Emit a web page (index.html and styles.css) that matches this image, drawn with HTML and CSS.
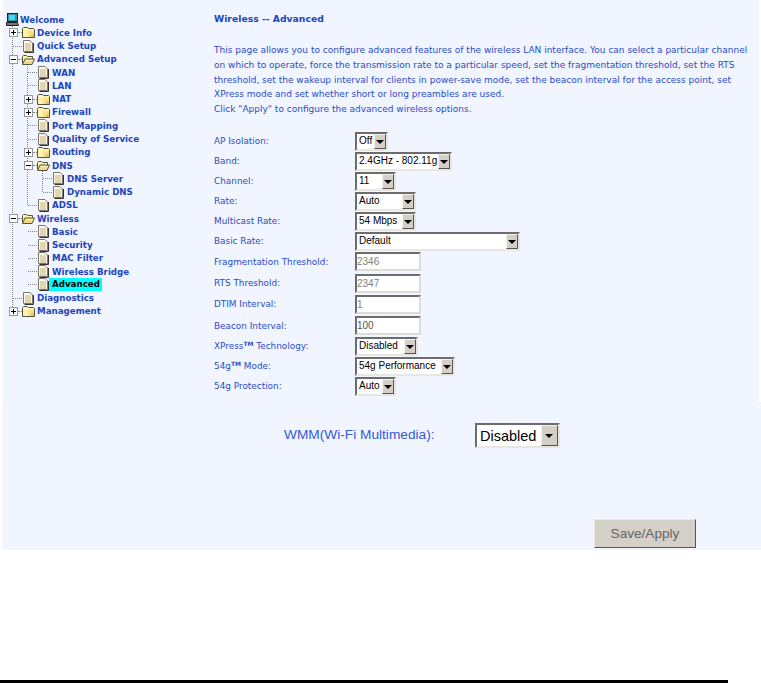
FILE: index.html
```html
<!DOCTYPE html>
<html lang="en">
<head>
<meta charset="utf-8">
<title>Wireless -- Advanced</title>
<link rel="stylesheet" href="styles.css">
</head>
<body>
<svg class="sprites" width="0" height="0" aria-hidden="true">
  <defs>
    <symbol id="folder" viewBox="0 0 13 13">
      <path d="M.5 11.5V2.5L1.5 1.5H5.5L6.500 2.500H11.500L12.500 3.500V11.500Z" fill="#fff2a8" stroke="#55553f"/>
      <path d="M1.500 3.500H5.500" stroke="#fffbe0"/>
      <path d="M6 5h6v6H6z" fill="#f5e08c"/>
      <path d="M9 8h3v3H9z" fill="#e0c66e"/>
    </symbol>
    <symbol id="open" viewBox="0 0 13 13">
      <path d="M.5 10.500V3.500L1.500 2.500H4.500L5.500 3.500H10.500V6" fill="#fff2a8" stroke="#55553f"/>
      <path d="M.5 11.500L3 6H12.500L10 11.500Z" fill="#f0d97e" stroke="#55553f"/>
      <path d="M4 7.500H11" stroke="#fff8cc"/>
    </symbol>
    <symbol id="doc" viewBox="0 0 13 13">
      <path d="M1.500 .5H8L10.500 3V11.500H1.500Z" fill="#fff8e4" stroke="#777"/>
      <path d="M3 4H9M3 6H9M3 8H9M3 10H9" stroke="#c4b27c"/>
      <path d="M11.500 3V12.500H2.500" fill="none" stroke="#333"/>
    </symbol>
    <symbol id="plus" viewBox="0 0 9 9">
      <rect x=".5" y=".5" width="8" height="8" fill="#fff" stroke="#999"/>
      <path d="M2 4.500H7M4.500 2V7" stroke="#000"/>
    </symbol>
    <symbol id="minus" viewBox="0 0 9 9">
      <rect x=".5" y=".5" width="8" height="8" fill="#fff" stroke="#999"/>
      <path d="M2 4.500H7" stroke="#000"/>
    </symbol>
    <symbol id="pc" viewBox="0 0 13 13">
      <rect x="1.500" y=".5" width="10" height="8" fill="#3a8aa8" stroke="#222"/>
      <rect x="3" y="2" width="6" height="5" fill="#35e0f5"/>
      <path d="M.5 9.500H11.500L12.500 12.500H.5Z" fill="#777" stroke="#222"/>
    </symbol>
  </defs>
</svg>
<div class="panel-top">
  <nav class="tree">
    <i class="guide g1"></i><i class="guide g2"></i><i class="guide g3"></i>
    <div class="node root"><svg class="pc"><use href="#pc"/></svg><a>Welcome</a></div>
    <div class="node l1"><svg class="box"><use href="#plus"/></svg><i class="dots"></i><svg class="ico"><use href="#folder"/></svg><a>Device Info</a></div>
    <div class="node l1"><i class="dots long"></i><svg class="ico"><use href="#doc"/></svg><a>Quick Setup</a></div>
    <div class="node l1"><svg class="box"><use href="#minus"/></svg><i class="dots"></i><svg class="ico"><use href="#open"/></svg><a>Advanced Setup</a></div>
    <div class="node l2"><i class="dots long"></i><svg class="ico"><use href="#doc"/></svg><a>WAN</a></div>
    <div class="node l2"><i class="dots long"></i><svg class="ico"><use href="#doc"/></svg><a>LAN</a></div>
    <div class="node l2"><svg class="box"><use href="#plus"/></svg><i class="dots"></i><svg class="ico"><use href="#folder"/></svg><a>NAT</a></div>
    <div class="node l2"><svg class="box"><use href="#plus"/></svg><i class="dots"></i><svg class="ico"><use href="#folder"/></svg><a>Firewall</a></div>
    <div class="node l2"><i class="dots long"></i><svg class="ico"><use href="#doc"/></svg><a>Port Mapping</a></div>
    <div class="node l2"><i class="dots long"></i><svg class="ico"><use href="#doc"/></svg><a>Quality of Service</a></div>
    <div class="node l2"><svg class="box"><use href="#plus"/></svg><i class="dots"></i><svg class="ico"><use href="#folder"/></svg><a>Routing</a></div>
    <div class="node l2"><svg class="box"><use href="#minus"/></svg><i class="dots"></i><svg class="ico"><use href="#open"/></svg><a>DNS</a></div>
    <div class="node l3"><i class="dots long"></i><svg class="ico"><use href="#doc"/></svg><a>DNS Server</a></div>
    <div class="node l3"><i class="dots long"></i><svg class="ico"><use href="#doc"/></svg><a>Dynamic DNS</a></div>
    <div class="node l2"><i class="dots long"></i><svg class="ico"><use href="#doc"/></svg><a>ADSL</a></div>
    <div class="node l1"><svg class="box"><use href="#minus"/></svg><i class="dots"></i><svg class="ico"><use href="#open"/></svg><a>Wireless</a></div>
    <div class="node l2"><i class="dots long"></i><svg class="ico"><use href="#doc"/></svg><a>Basic</a></div>
    <div class="node l2"><i class="dots long"></i><svg class="ico"><use href="#doc"/></svg><a>Security</a></div>
    <div class="node l2"><i class="dots long"></i><svg class="ico"><use href="#doc"/></svg><a>MAC Filter</a></div>
    <div class="node l2"><i class="dots long"></i><svg class="ico"><use href="#doc"/></svg><a>Wireless Bridge</a></div>
    <div class="node l2"><i class="dots long"></i><svg class="ico"><use href="#doc"/></svg><a class="current">Advanced</a></div>
    <div class="node l1"><i class="dots long"></i><svg class="ico"><use href="#doc"/></svg><a>Diagnostics</a></div>
    <div class="node l1"><svg class="box"><use href="#plus"/></svg><i class="dots"></i><svg class="ico"><use href="#folder"/></svg><a>Management</a></div>
  </nav>
  <main class="content">
    <h1 class="title">Wireless -- Advanced</h1>
    <p class="intro">This page allows you to configure advanced features of the wireless LAN interface. You can select a particular channel<br>on which to operate, force the transmission rate to a particular speed, set the fragmentation threshold, set the RTS<br>threshold, set the wakeup interval for clients in power-save mode, set the beacon interval for the access point, set<br>XPress mode and set whether short or long preambles are used.<br>Click "Apply" to configure the advanced wireless options.</p>
    <div class="form">
      <div class="row"><span class="lbl">AP Isolation:</span><span class="sel w33"><span class="val">Off</span><b class="arrow"></b></span></div>
      <div class="row"><span class="lbl">Band:</span><span class="sel w97"><span class="val">2.4GHz - 802.11g</span><b class="arrow"></b></span></div>
      <div class="row"><span class="lbl">Channel:</span><span class="sel w41"><span class="val">11</span><b class="arrow"></b></span></div>
      <div class="row"><span class="lbl">Rate:</span><span class="sel w61"><span class="val">Auto</span><b class="arrow"></b></span></div>
      <div class="row"><span class="lbl">Multicast Rate:</span><span class="sel w61"><span class="val">54 Mbps</span><b class="arrow"></b></span></div>
      <div class="row"><span class="lbl">Basic Rate:</span><span class="sel w165"><span class="val">Default</span><b class="arrow"></b></span></div>
      <div class="row tall"><span class="lbl">Fragmentation Threshold:</span><span class="inp">2346</span></div>
      <div class="row tall"><span class="lbl">RTS Threshold:</span><span class="inp">2347</span></div>
      <div class="row tall"><span class="lbl">DTIM Interval:</span><span class="inp">1</span></div>
      <div class="row tall"><span class="lbl">Beacon Interval:</span><span class="inp dark">100</span></div>
      <div class="row"><span class="lbl">XPress<sup class="tm">TM</sup> Technology:</span><span class="sel w63"><span class="val">Disabled</span><b class="arrow"></b></span></div>
      <div class="row"><span class="lbl">54g<sup class="tm">TM</sup> Mode:</span><span class="sel w100"><span class="val">54g Performance</span><b class="arrow"></b></span></div>
      <div class="row"><span class="lbl">54g Protection:</span><span class="sel w41"><span class="val">Auto</span><b class="arrow"></b></span></div>
    </div>
  </main>
</div>
<div class="panel-bottom">
  <section class="wmm">
    <span class="wmm-lbl">WMM(Wi-Fi Multimedia):</span>
    <span class="sel big"><span class="val">Disabled</span><b class="arrow"></b></span>
  </section>
  <div class="actions"><button class="save" type="button">Save/Apply</button></div>
</div>
<hr class="rule">
</body>
</html>
```
FILE: styles.css
```css
html, body { margin: 0; padding: 0; background: #fff; }
body { width: 761px; height: 683px; overflow: hidden; font-family: "Liberation Sans", Arial, sans-serif; }
.sprites { position: absolute; }
.panel-top { margin-left: 3px; width: 756px; height: 402px; background: #f0f5ff; display: grid; grid-template-columns: 208px 1fr; }
.panel-bottom { margin-left: 2px; width: 759px; height: 148px; background: #f0f5ff; display: grid; grid-template-rows: 117px 31px; }

.tree { position: relative; padding-top: 13px; }
.guide { position: absolute; width: 0; border-left: 1px dotted #888; }
.g1 { left: 9px; top: 26px; height: 285px; }
.g2 { left: 24px; top: 66px; height: 139px; }
.g3 { left: 39px; top: 171px; height: 21px; }
.node { position: relative; height: 13.27px; display: flex; align-items: center; font: bold 8.7px/13px "DejaVu Sans", Verdana, sans-serif; color: #2244bb; white-space: nowrap; }
.node a { margin-left: 2px; line-height: 12px; }
.node a.current { background: #00ffff; color: #000; padding: 0 2px 0 3px; margin-left: -1px; line-height: 13px; }
.root { padding-left: 3px; }
.root a { margin-left: 1px; }
.l1 { padding-left: 6px; }
.l2 { padding-left: 21px; }
.l3 { padding-left: 36px; }
.pc { width: 13px; height: 13px; flex: none; }
.box { width: 9px; height: 9px; flex: none; }
.dots { width: 4px; flex: none; border-top: 1px dotted #888; }
.dots.long { width: 9px; margin-left: 4px; }
.ico { width: 13px; height: 13px; flex: none; }

.content { padding: 13px 0 0 3px; color: #2c4cc4; }
.title { margin: 0; color: #2244bb; font: bold 9.25px/12px "DejaVu Sans", Verdana, sans-serif; }
.intro { margin: 18px 0 0; font: 9px/14.75px "DejaVu Sans", Verdana, sans-serif; white-space: nowrap; }
.form { margin-top: 14.25px; display: flex; flex-direction: column; }
.row { height: 20px; display: flex; align-items: center; font: 8.9px/14px "DejaVu Sans", Verdana, sans-serif; }
.row.tall { height: 21.35px; }
.lbl { width: 141px; flex: none; white-space: nowrap; }
.tm { font-size: 6px; line-height: 0; vertical-align: 3px; font-weight: bold; }

.sel { height: 19px; box-sizing: border-box; display: flex; align-items: center; justify-content: space-between; background: #fff; border: 2px solid; border-color: #6c6c6c #e8e6e0 #e8e6e0 #6c6c6c; color: #000; font: 10px/14px "Liberation Sans", Arial, sans-serif; white-space: nowrap; overflow: hidden; }
.val { padding-left: 2px; }
.arrow { width: 12px; height: 15px; flex: none; box-sizing: border-box; background: #d4d0c8; border: 1px solid; border-color: #f4f2ec #555 #555 #f4f2ec; position: relative; }
.arrow::after { content: ""; position: absolute; left: 1px; top: 5px; border: 4px solid transparent; border-top: 4px solid #000; border-bottom: 0; }
.w33 { width: 33px; }
.w41 { width: 41px; }
.w61 { width: 61px; }
.w63 { width: 63px; }
.w97 { width: 97px; }
.w100 { width: 100px; }
.w165 { width: 165px; }
.inp { width: 66px; height: 19px; box-sizing: border-box; background: #fff; border: 2px solid; border-color: #6c6c6c #dedcd6 #dedcd6 #6c6c6c; color: #808080; font: 10px/15px "Liberation Sans", Arial, sans-serif; }
.inp.dark { color: #555; }

.wmm { padding: 21px 0 0 282px; display: flex; align-items: flex-start; color: #3558d8; font: 13.7px/24px "Liberation Sans", Arial, sans-serif; }
.wmm-lbl { width: 191px; flex: none; }
.sel.big { width: 85px; height: 25px; font: 14.5px/20px "Liberation Sans", Arial, sans-serif; }
.sel.big .val { padding-left: 3px; }
.sel.big .arrow { width: 17px; height: 21px; }
.sel.big .arrow::after { left: 3px; top: 8px; }

.actions { padding-left: 592px; }
.save { display: block; width: 102px; height: 29px; box-sizing: border-box; margin: 0; padding: 0; background: #d4d0c8; border: 1px solid; border-color: #ece9e2 #555 #555 #ece9e2; color: #666; font: 13.6px "Liberation Sans", Arial, sans-serif; }

.rule { margin: 130px 0 0; width: 728px; height: 3px; border: 0; background: #000; }
```
